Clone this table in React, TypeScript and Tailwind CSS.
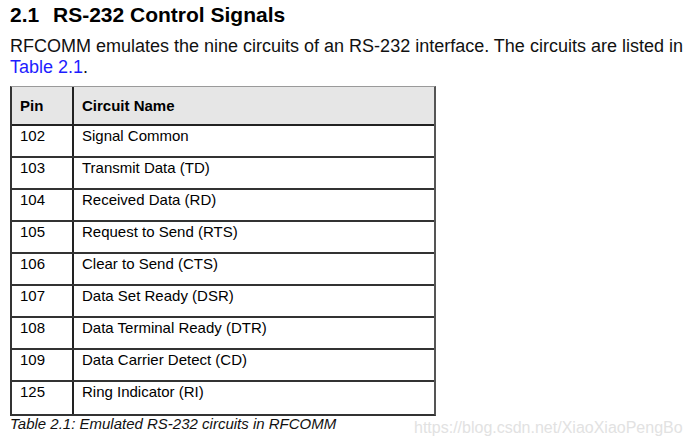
const rows: [string, string][] = [
  ["102", "Signal Common"],
  ["103", "Transmit Data (TD)"],
  ["104", "Received Data (RD)"],
  ["105", "Request to Send (RTS)"],
  ["106", "Clear to Send (CTS)"],
  ["107", "Data Set Ready (DSR)"],
  ["108", "Data Terminal Ready (DTR)"],
  ["109", "Data Carrier Detect (CD)"],
  ["125", "Ring Indicator (RI)"],
];

export default function App() {
  return (
    <div className="w-[692px] h-[447px] bg-white text-black font-['Liberation_Sans',Arial,sans-serif] pl-[10px] pt-[3px] relative overflow-hidden">
      <h2 className="text-[21px] font-bold leading-[24px] flex">
        <span className="w-[43px]">2.1</span>
        <span>RS-232 Control Signals</span>
      </h2>
      <p className="mt-[9px] text-[18px] leading-[21px] text-[#111]">
        RFCOMM emulates the nine circuits of an RS-232 interface. The circuits are listed in{" "}
        <span className="text-[#1d1dff]">Table 2.1</span>.
      </p>
      <div className="mt-[8px] w-[426px] border-t border-[#9a9a9a] border-l-2 border-l-[#333] border-r-2 border-r-[#555] border-b-2 border-b-[#333]">
        <div className="flex h-[39px] bg-[#e6e6e6] border-b-2 border-[#222] text-[15px] font-bold leading-[18px]">
          <div className="w-[62px] pl-[8px] pt-[10px] border-r-2 border-[#222]">Pin</div>
          <div className="flex-1 pl-[8px] pt-[10px]">Circuit Name</div>
        </div>
        {rows.map(([pin, name], i) => (
          <div
            key={pin}
            className={`flex h-[32px] text-[15px] leading-[18px] ${i < rows.length - 1 ? "border-b-2 border-[#333]" : ""}`}
          >
            <div className="w-[62px] pl-[8px] pt-[1px] border-r-2 border-[#222]">{pin}</div>
            <div className="flex-1 pl-[8px] pt-[1px]">{name}</div>
          </div>
        ))}
      </div>
      <p className="text-[15px] italic leading-[16px] text-[#111]">
        Table 2.1: Emulated RS-232 circuits in RFCOMM
      </p>
      <div className="absolute left-[414px] top-[419px] text-[16px] text-[#e2e2e2] leading-[18px]">
        https://blog.csdn.net/XiaoXiaoPengBo
      </div>
    </div>
  );
}
